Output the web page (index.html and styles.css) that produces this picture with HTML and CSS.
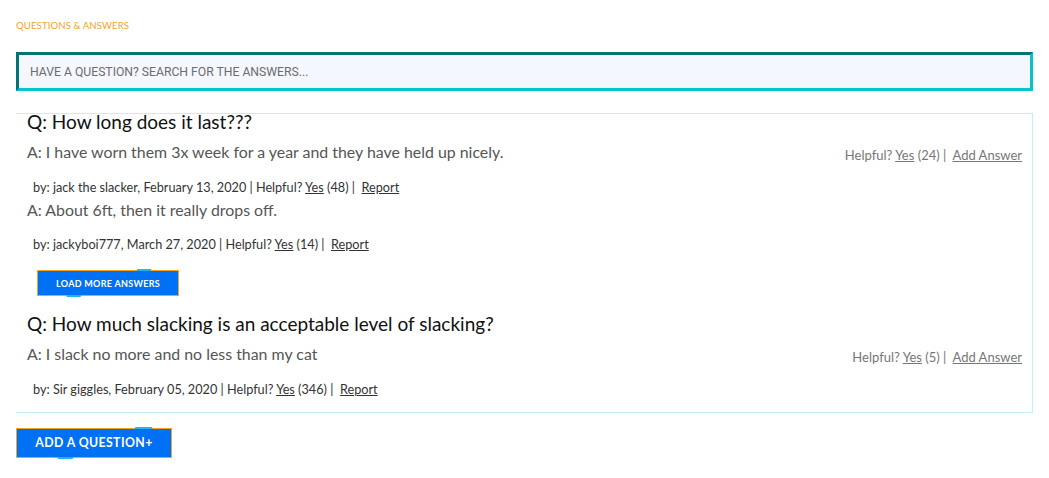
FILE: index.html
```html
<!DOCTYPE html>
<html lang="en">
<head>
<meta charset="utf-8">
<title>Questions &amp; Answers</title>
<link rel="stylesheet" href="styles.css">
</head>
<body>
<section class="qa">
  <h2 class="qa-title">QUESTIONS &amp; ANSWERS</h2>
  <div class="search">
    <input class="search-input" type="text" placeholder="HAVE A QUESTION? SEARCH FOR THE ANSWERS...">
  </div>
  <div class="qa-list">
    <div class="question">
      <div class="q-main">
        <h3 class="q-text">Q: How long does it last???</h3>
        <div class="answer">
          <p class="a-text">A: I have worn them 3x week for a year and they have held up nicely.</p>
          <p class="a-meta">by: jack the slacker, February 13, 2020 | Helpful? <a class="link">Yes</a> (48) |&nbsp; <a class="link">Report</a></p>
        </div>
        <div class="answer">
          <p class="a-text">A: About 6ft, then it really drops off.</p>
          <p class="a-meta">by: jackyboi777, March 27, 2020 | Helpful? <a class="link">Yes</a> (14) |&nbsp; <a class="link">Report</a></p>
        </div>
        <button class="btn btn-small">LOAD MORE ANSWERS</button>
      </div>
      <div class="q-side">Helpful? <a class="link">Yes</a> (24) |&nbsp; <a class="link">Add Answer</a></div>
    </div>
    <div class="question">
      <div class="q-main">
        <h3 class="q-text">Q: How much slacking is an acceptable level of slacking?</h3>
        <div class="answer">
          <p class="a-text">A: I slack no more and no less than my cat</p>
          <p class="a-meta">by: Sir giggles, February 05, 2020 | Helpful? <a class="link">Yes</a> (346) |&nbsp; <a class="link">Report</a></p>
        </div>
      </div>
      <div class="q-side">Helpful? <a class="link">Yes</a> (5) |&nbsp; <a class="link">Add Answer</a></div>
    </div>
  </div>
  <button class="btn btn-large">ADD A QUESTION+</button>
</section>
</body>
</html>
```

FILE: styles.css
```css
* { box-sizing: border-box; }
body {
  margin: 0;
  background: #fff;
  font-family: "Lato", "Noto Sans", sans-serif;
}
.qa {
  padding: 20px 16px 20px 16px;
}
.qa-title {
  margin: 0;
  font-size: 9.6px;
  font-weight: 400;
  color: #f5a31f;
  letter-spacing: 0.1px;
  line-height: 12px;
}
.search {
  margin-top: 20px;
}
.search-input {
  display: block;
  width: 100%;
  height: 39px;
  border-style: solid;
  border-width: 3px;
  border-color: #037373 #05c4cb #05c4cb #037373;
  background: #f4f7fd;
  padding: 0 11px;
  font-family: "Roboto", "Liberation Sans", sans-serif;
  font-size: 12.2px;
  color: #666;
  outline: none;
}
.search-input::placeholder { color: #6c6c70; }
.qa-list {
  margin-top: 22px;
  border: 1px solid #c6eef6;
  border-left: none;
  padding: 0 10px 15px 11px;
}
.question {
  display: flex;
  justify-content: space-between;
}
.question + .question { margin-top: 20px; }
.q-main { flex: 1; }
.q-text {
  margin: 0;
  font-size: 19px;
  font-weight: 400;
  color: #111;
  line-height: 16px;
}
.a-text {
  margin: 13px 0 0 0;
  font-size: 15.9px;
  color: #555;
  line-height: 18px;
}
.answer + .answer .a-text { margin-top: 6px; }
.a-meta {
  margin: 17.5px 0 0 6px;
  font-size: 12.7px;
  color: #333;
  line-height: 16px;
}
.link {
  text-decoration: underline;
  color: inherit;
}
.q-side {
  padding-top: 33px;
  font-size: 13px;
  line-height: 16px;
  color: #777;
  white-space: nowrap;
}
.btn {
  position: relative;
  display: block;
  background: #0070f5;
  color: #fff;
  border: 1px solid #f5a31f;
  font-family: inherit;
  cursor: pointer;
  padding: 0;
}
.btn::before, .btn::after {
  content: "";
  position: absolute;
  height: 2px;
  background: #1fb6f0;
  transform: skewX(-30deg);
}
.btn-small {
  margin: 18px 0 0 10px;
  width: 142px;
  height: 26px;
  font-size: 9px;
  font-weight: 700;
  letter-spacing: 0.3px;
}
.btn-small::before { top: -2px; left: 99px; width: 14px; }
.btn-small::after { bottom: -2px; left: 29px; width: 14px; }
.btn-large {
  margin-top: 15px;
  width: 156px;
  height: 30px;
  font-size: 12.3px;
  font-weight: 700;
  letter-spacing: 0.4px;
}
.btn-large::before { top: -2px; left: 118px; width: 17px; }
.btn-large::after { bottom: -2px; left: 41px; width: 15px; }
```
